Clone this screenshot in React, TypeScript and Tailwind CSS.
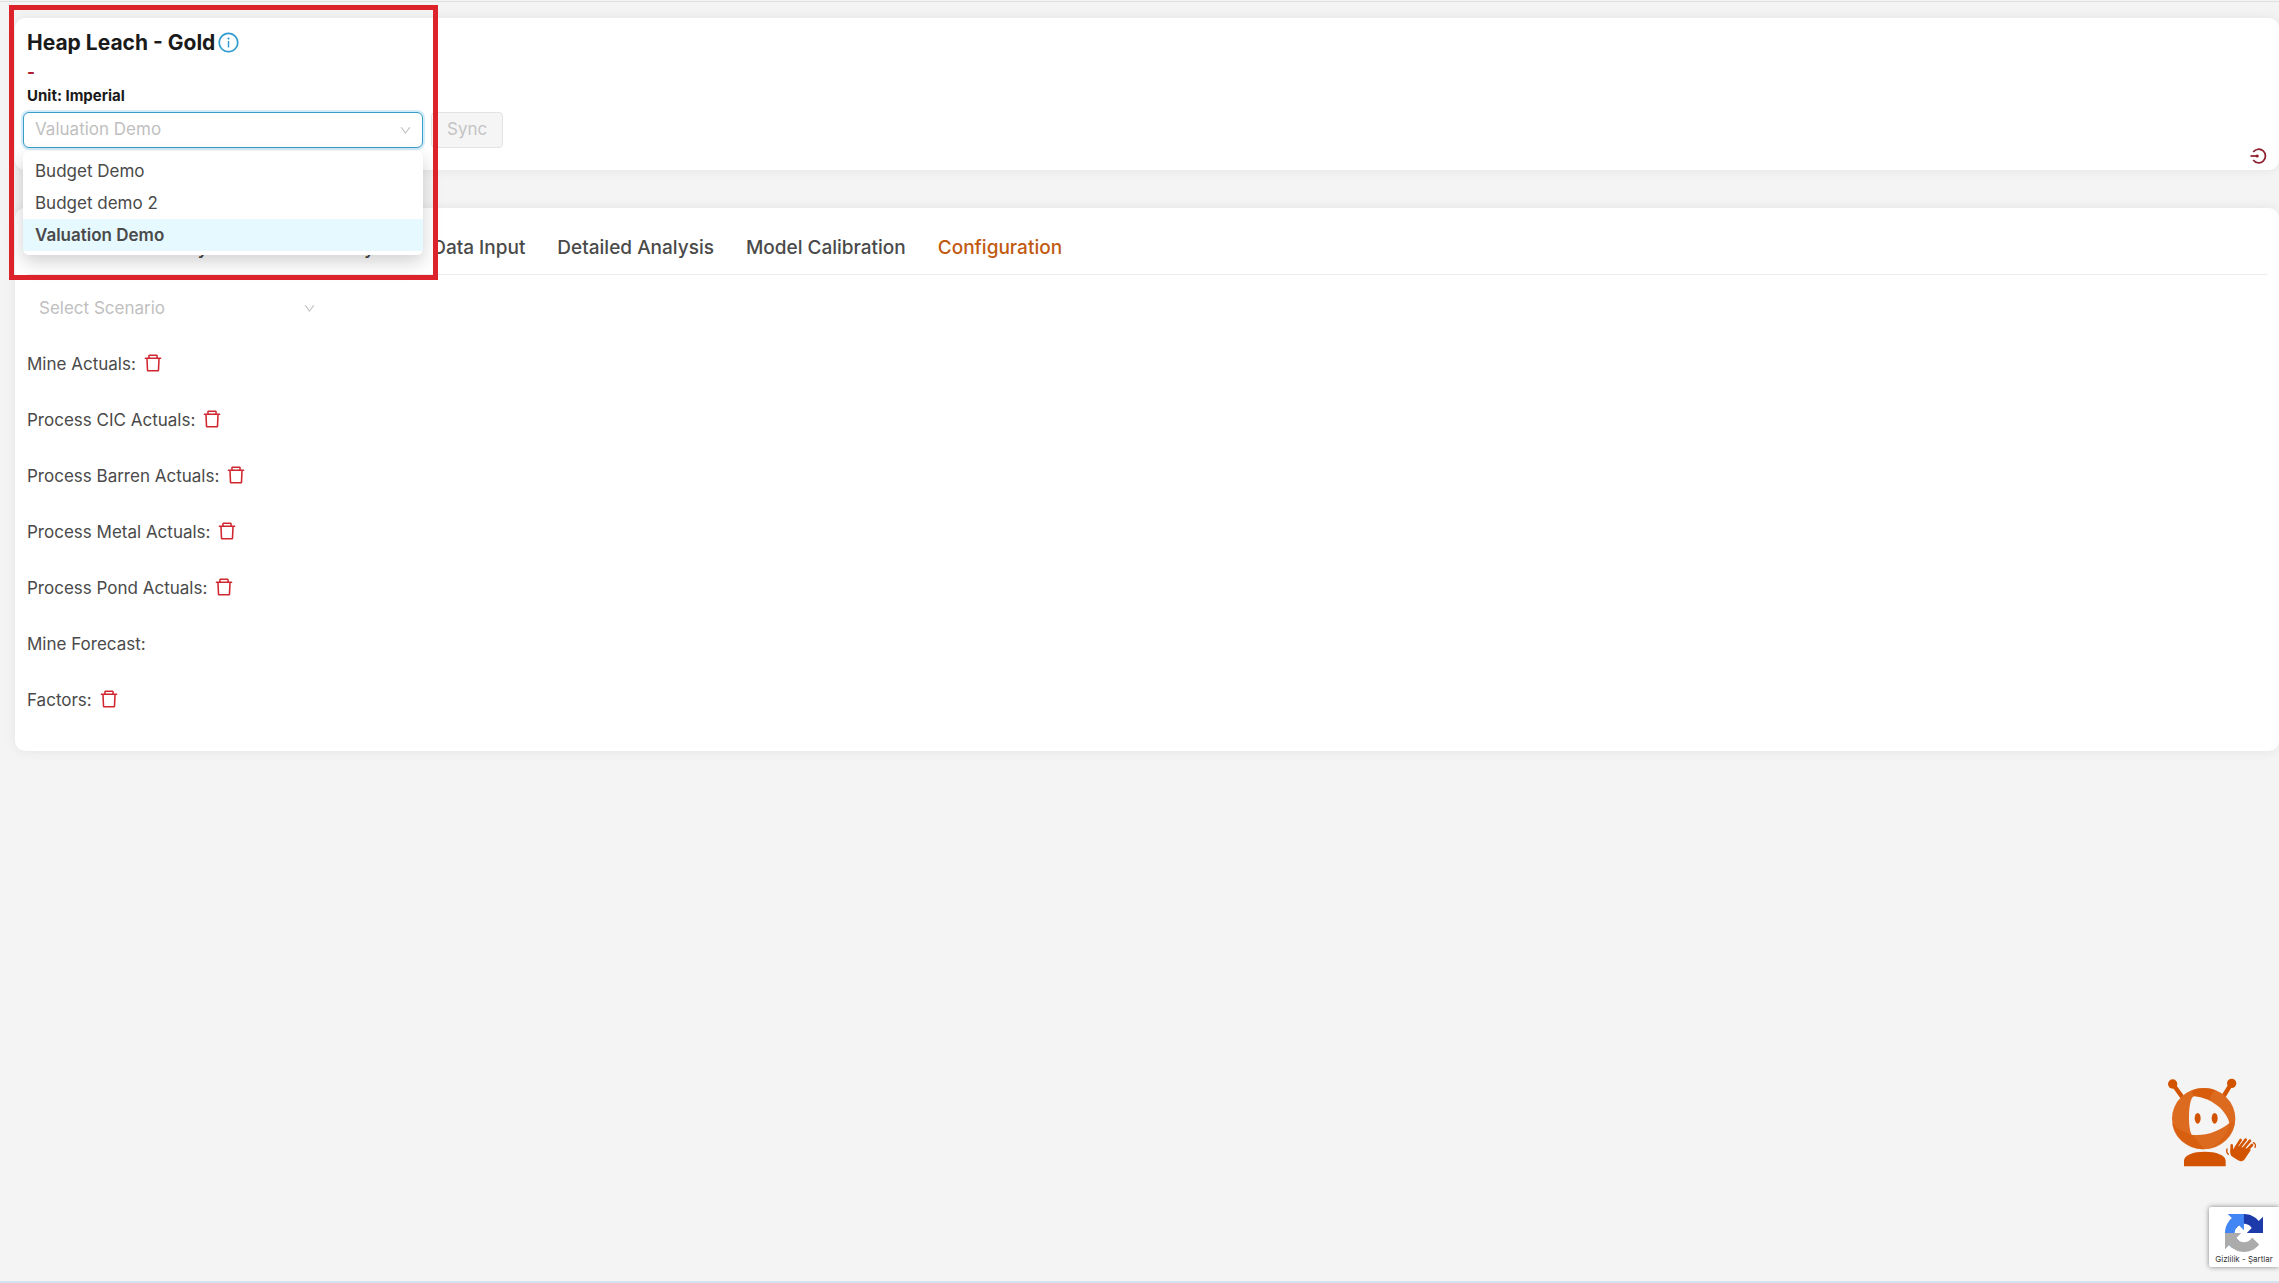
import React, { useState } from 'react';
import { AiOutlineDelete, AiOutlineDown, AiOutlineInfoCircle } from 'react-icons/ai';

const budgets = ['Budget Demo', 'Budget demo 2', 'Valuation Demo'];

const tabs = [
  'Consolidation Analysis',
  'Trend Analysis',
  'Data Input',
  'Detailed Analysis',
  'Model Calibration',
  'Configuration'
];

const rows = [
  { label: 'Mine Actuals', removable: true },
  { label: 'Process CIC Actuals', removable: true },
  { label: 'Process Barren Actuals', removable: true },
  { label: 'Process Metal Actuals', removable: true },
  { label: 'Process Pond Actuals', removable: true },
  { label: 'Mine Forecast', removable: false },
  { label: 'Factors', removable: true }
];

const ExitIcon = () => (
  <svg width="17" height="16" viewBox="0 0 18 17" fill="none" stroke="#8b1d2c" strokeWidth="1.8">
    <path d="M3.4 4.2A7.2 7.2 0 1 1 3.4 12.8" />
    <path d="M0.5 8.5H8" />
    <circle cx="7.6" cy="8.5" r="1.7" fill="#8b1d2c" stroke="none" />
  </svg>
);

const BotIcon = () => (
  <svg width="90" height="89" viewBox="140 85 270 267">
    <g stroke="#d35400" strokeWidth="13" strokeLinecap="round">
      <path d="M158 104L184 140" />
      <path d="M333 102L312 136" />
    </g>
    <circle cx="157" cy="103" r="14" fill="#d35400" />
    <circle cx="334" cy="101" r="14" fill="#d35400" />
    <ellipse cx="250" cy="207" rx="95" ry="92" fill="#dc6b20" />
    {/* Helmet shading */}
    <path d="M156 220c4 8 30 28 56 34 6 2 20 20 40 45-52 0-93-35-96-79z" fill="#d35400" opacity="0.5" />
    <path d="M218 121c20-7 45-8 66 0 -8 8-14 18-16 32-12-6-28-12-47-14-6-6-6-12-3-18z" fill="#d35400" opacity="0.6" />
    <path d="M328 220l16-5c-5 36-34 66-70 79 30-20 48-44 54-74z" fill="#d35400" opacity="0.3" />
    <path d="M221 140c-10 2-15 32-15 62 0 27 3 44 8 53 40 5 82-9 113-35C318 182 274 145 221 140z" fill="#f5f5f5" />
    <ellipse cx="232" cy="206" rx="9" ry="16" fill="#d35400" />
    <ellipse cx="283" cy="206" rx="9" ry="16" fill="#d35400" />
    <path d="M191 350v-17c0-17 28-27 62-27s63 10 63 27v17z" fill="#d35400" />
    <g stroke="#d35400" strokeWidth="8" strokeLinecap="round">
      <path d="M345 296L361 271" />
      <path d="M354 298L376 270" />
      <path d="M364 303L389 273" />
      <path d="M372 310L395 286" />
      <path d="M335 307L334 287" />
    </g>
    <path d="M331 296l10 2 13-8 38 10-20 30c-5 5-13 6-19 2l-20-13c-4-5-4-14-2-23z" fill="#d35400" />
    <g fill="none" stroke="#d35400" strokeWidth="4" strokeLinecap="round">
      <path d="M320 298c-2 6-1 11 4 16" />
      <path d="M399 279c6 3 8 8 5 14" />
    </g>
  </svg>
);

const CaptchaLogo = () => (
  <svg width="38" height="38" viewBox="0 0 64 64">
    <path fill="#1c3aa9" d="M64 31.955l-.033-1.37V4.687l-7.16 7.16C50.948 4.674 42.033.093 32.05.093c-10.4 0-19.622 4.96-25.458 12.64l11.736 11.86a15.55 15.55 0 0 1 4.754-5.334c2.05-1.6 4.952-2.906 8.968-2.906.485 0 .86.057 1.135.163 4.976.393 9.288 3.14 11.828 7.124l-8.307 8.307L64 31.953" />
    <path fill="#4285f4" d="M31.862.094l-1.37.033H4.594l7.16 7.16C4.58 13.147 0 22.06 0 32.046c0 10.4 4.96 19.622 12.64 25.458L24.5 45.768a15.55 15.55 0 0 1-5.334-4.754c-1.6-2.05-2.906-4.952-2.906-8.968 0-.485.057-.86.163-1.135.393-4.976 3.14-9.288 7.124-11.828l8.307 8.307L31.86.095" />
    <path fill="#ababab" d="M.001 32.045l.033 1.37v25.898l7.16-7.16c5.86 7.173 14.774 11.754 24.76 11.754 10.4 0 19.622-4.96 25.458-12.64l-11.736-11.86a15.55 15.55 0 0 1-4.754 5.334c-2.05 1.6-4.952 2.906-8.968 2.906-.485 0-.86-.057-1.135-.163-4.976-.393-9.288-3.14-11.828-7.124l8.307-8.307c-10.522.04-22.4.066-27.295-.005" />
  </svg>
);

export default function App() {
  const [budget, setBudget] = useState('Valuation Demo');
  const [activeTab, setActiveTab] = useState('Configuration');

  return (
    <div className="relative flex min-h-screen flex-col overflow-hidden bg-[#f4f4f4] font-['Inter',sans-serif] text-[17px] text-[#4a4a4a]">
      <div className="h-0.5 border-b border-[#e0e0e0]" />

      {/* Header card */}
      <header className="mt-4 ml-[15px] flex justify-between rounded-[10px] bg-white px-3 pt-3 pb-1.5 shadow-[0_0_12px_rgba(0,0,0,0.07)]">
        <div className="pb-4">
          <div className="flex h-6 items-center gap-0.5">
            <h1 className="pt-0.5 text-[21px] font-bold text-[#1a1a1a]">Heap Leach - Gold</h1>
            <AiOutlineInfoCircle size={23} className="text-[#2f9bd0]" />
          </div>
          <p className="mt-2 h-5 text-[17px] leading-5 font-bold text-[#b01e2e]">-</p>
          <label htmlFor="budget" className="mt-1 block h-5 text-[15px] leading-5 font-bold text-[#1a1a1a]">
            Unit: Imperial
          </label>
          <div className="mt-1.5 -ml-1 flex gap-2">
            <div className="relative w-[400px]">
              <select
                id="budget"
                value={budget}
                onChange={(e) => setBudget(e.target.value)}
                className="h-9 w-full appearance-none rounded-md border border-[#3a9dc8] bg-white px-[11px] text-[17px] text-[#bfbfbf] shadow-[0_0_0_2px_rgba(24,160,220,0.2)] outline-none"
              >
                {budgets.map((name) => (
                  <option key={name}>{name}</option>
                ))}
              </select>
              <AiOutlineDown size={13} className="pointer-events-none absolute top-3 right-[11px] text-[#bfbfbf]" />

              {/* Open menu */}
              <ul role="listbox" aria-label="Budget" className="absolute top-[39px] left-0 z-10 w-full rounded-md bg-white py-1 shadow-[0_6px_16px_rgba(0,0,0,0.14),0_9px_28px_rgba(0,0,0,0.05)]">
                {budgets.map((name) => (
                  <li
                    key={name}
                    role="option"
                    aria-selected={name === budget}
                    onClick={() => setBudget(name)}
                    className={`h-8 px-3 leading-8 ${name === budget ? 'bg-[#e6f9ff] font-semibold' : ''}`}
                  >
                    {name}
                  </li>
                ))}
              </ul>
            </div>
            <button disabled className="h-9 rounded-sm border border-[#e3e3e3] bg-[#f5f5f5] px-[15px] text-[#c4c4c4]">
              Sync
            </button>
          </div>
        </div>
        <button aria-label="Exit" className="self-end">
          <ExitIcon />
        </button>
      </header>

      {/* Main card */}
      <main className="mt-[38px] ml-[15px] rounded-[10px] bg-white px-3 pt-3 pb-[23px] shadow-[0_0_12px_rgba(0,0,0,0.07)]">
        <nav className="mb-[5px] flex h-[55px] items-center gap-8 border-b border-[#ececec] pt-0.5">
          {tabs.map((tab) => (
            <button
              key={tab}
              onClick={() => setActiveTab(tab)}
              className={`text-[19px] font-medium whitespace-nowrap ${tab === activeTab ? 'text-[#c15a10]' : ''}`}
            >
              {tab}
            </button>
          ))}
        </nav>

        <div className="relative flex h-14 w-[300px] items-center">
          <select aria-label="Scenario" defaultValue="" className="h-9 w-full appearance-none bg-white px-3 pt-0.5 text-[17px] text-[#bfbfbf] outline-none">
            <option value="">Select Scenario</option>
          </select>
          <AiOutlineDown size={13} className="pointer-events-none absolute right-[11px] text-[#bfbfbf]" />
        </div>

        {rows.map(({ label, removable }) => (
          <div key={label} className="flex h-14 items-center">
            <span className="pt-0.5">{label}</span>
            <span className="mr-1.5 pt-0.5">:</span>
            {removable && (
              <button aria-label={`Delete ${label}`} className="pb-0.5 text-[#d0262f]">
                <AiOutlineDelete size={22} />
              </button>
            )}
          </div>
        ))}
      </main>

      <footer className="mt-auto h-0.5 bg-[#d3e4ee]" />

      {/* Highlight frame */}
      <div className="pointer-events-none absolute top-[5px] left-[9px] z-20 h-[275px] w-[429px] border-5 border-[#dc222b]" />

      <button aria-label="Chat assistant" className="absolute right-[22px] bottom-[116px]">
        <BotIcon />
      </button>

      <div className="absolute right-0 bottom-4 flex h-[60px] w-[70px] flex-col items-center justify-end rounded-l-xs bg-white pb-0.5 text-[8px] leading-3 shadow-[0_0_5px_gray]">
        <CaptchaLogo />
        <span className="mt-px whitespace-nowrap text-[#333]">Gizlilik - Şartlar</span>
      </div>
    </div>
  );
}
